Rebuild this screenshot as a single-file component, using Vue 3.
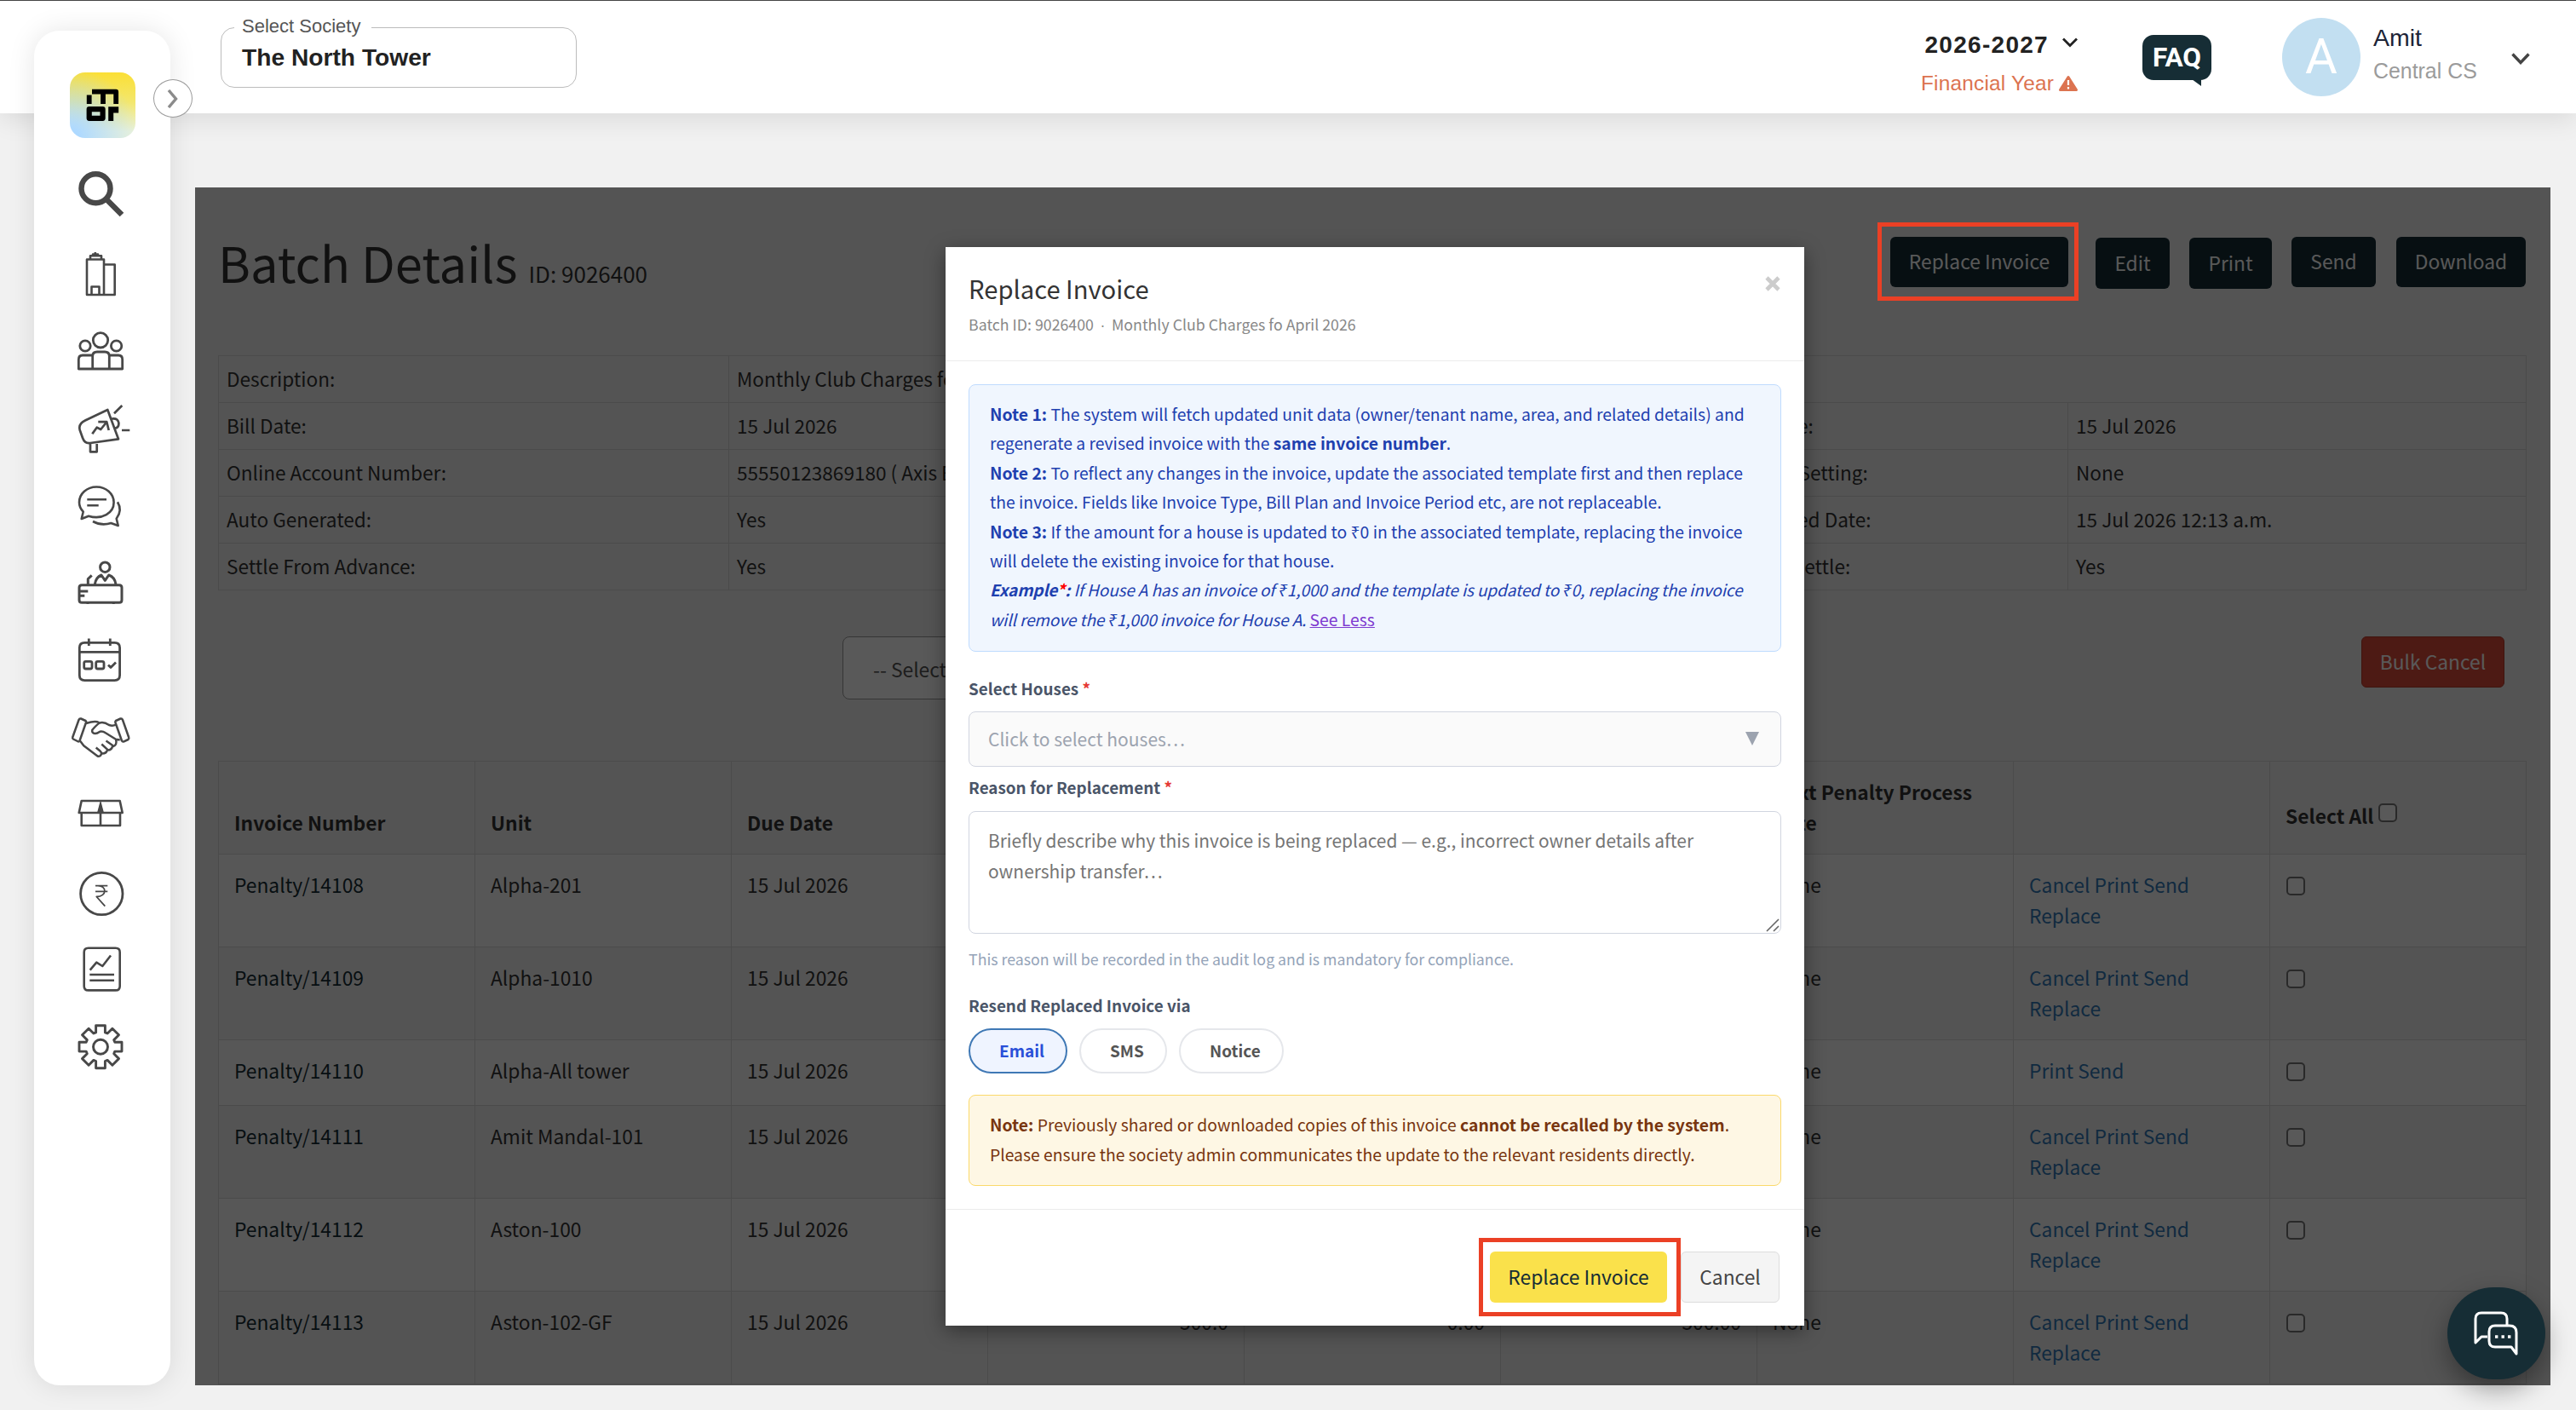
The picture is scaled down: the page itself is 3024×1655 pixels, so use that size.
<script setup>
import { ref } from 'vue'

const society = ref('The North Tower')
const reason = ref('')
const channels = ref([
  { label: 'Email', active: true },
  { label: 'SMS', active: false },
  { label: 'Notice', active: false },
])

const details = [
  ['Bill Date:', '15 Jul 2026', 'Due Date:', '15 Jul 2026'],
  ['Online Account Number:', '55550123869180 ( Axis Bank )', 'Penalty Setting:', 'None'],
  ['Auto Generated:', 'Yes', 'Generated Date:', '15 Jul 2026 12:13 a.m.'],
  ['Settle From Advance:', 'Yes', 'Enable Settle:', 'Yes'],
]

const invoices = [
  { no: 'Penalty/14108', unit: 'Alpha-201' },
  { no: 'Penalty/14109', unit: 'Alpha-1010' },
  { no: 'Penalty/14110', unit: 'Alpha-All tower', short: true },
  { no: 'Penalty/14111', unit: 'Amit Mandal-101' },
  { no: 'Penalty/14112', unit: 'Aston-100' },
  { no: 'Penalty/14113', unit: 'Aston-102-GF', amount: '500.0', penalty: '0.00', total: '500.00' },
]

// gear outline: one tooth rotated eight times
const gear = (() => {
  const tooth = [[-5.4, -16.8], [-5.4, -25], [5.4, -25], [5.4, -16.8]]
  const pts = []
  for (let k = 0; k < 8; k++) {
    const a = (k * Math.PI) / 4
    tooth.forEach(([x, y]) => {
      const px = 40 + x * Math.cos(a) - y * Math.sin(a)
      const py = 50.7 + x * Math.sin(a) + y * Math.cos(a)
      pts.push(`${px.toFixed(1)} ${py.toFixed(1)}`)
    })
  }
  return `M${pts.join('L')}Z`
})()

const menu = [
  { name: 'search', w: 6.5, d: 'M51.5 33.3a17 17 0 1 1-34 0a17 17 0 1 1 34 0ZM46.5 45.5L65 64' },
  {
    name: 'building',
    w: 2.6,
    d: 'M24 26.5H44V68H24ZM44 32.5H56.7V68H44M28 26V22.3H41V26M31 22V20.5H37V22M33.8 18V21M29.5 68V58.5H38.5V68',
  },
  {
    name: 'people',
    w: 2.8,
    d: 'M48.7 31.3a8.7 8.7 0 1 1-17.4 0a8.7 8.7 0 1 1 17.4 0ZM28.2 38a6.2 6.2 0 1 1-12.4 0a6.2 6.2 0 1 1 12.4 0ZM64.8 38a6.2 6.2 0 1 1-12.4 0a6.2 6.2 0 1 1 12.4 0ZM30.7 65V50Q30.7 45 36 45H45Q50.3 45 50.3 50V65M30.7 49H19Q14.3 49 14.3 54V65H65.7V54Q65.7 49 61 49H50.3',
  },
  {
    name: 'campaign',
    w: 2.7,
    d: 'M48.3 23L22 35.5Q13.5 39.5 15.8 47L19 56Q21.5 63 28 62L61 57.3ZM28 62V72.3H35.7V61M53 33.7Q60 32.5 61.3 38Q62 43.5 57.3 44.7M30.3 51.3L35.7 43.7L40.3 46L46.7 38M37.3 37.2H47.3L49.7 47M56 27.3L65.3 18M65 47H74.3',
  },
  {
    name: 'chat',
    w: 2.6,
    d: 'M19.7 52.7L17.7 61L26 57.7C42 62.5 55.6 54 55.6 41.7C55.6 31.5 46.5 23.5 35.3 23.5C24 23.5 15 31.5 15 41.7Q15 47.5 19.7 52.7ZM24.3 38.3H47M24.3 45.3H37.7M60 41.3Q66 51 58.7 60.7L60.7 69L52.3 66Q41 69.5 31 64',
  },
  {
    name: 'frontdesk',
    w: 3,
    d: 'M51 27.7a5.7 5.7 0 1 1-11.4 0a5.7 5.7 0 1 1 11.4 0ZM33.3 48Q34.5 39.5 41 37L45.3 43.3L49.7 37Q57 39.5 58 48M25.3 48V41.5L29.7 37.3M18 48.7H62Q65 48.7 65 51.7V66.3Q65 69.3 62 69.3H18Q15 69.3 15 66.3V51.7Q15 48.7 18 48.7ZM16 56H25.3M16 61.3H21.3M25 70V71M55.3 70V71',
  },
  {
    name: 'calendar',
    w: 2.8,
    d: 'M21.3 26.3H56.6Q62.6 26.3 62.6 32.3V64.6Q62.6 70.6 56.6 70.6H21.3Q15.3 70.6 15.3 64.6V32.3Q15.3 26.3 21.3 26.3ZM15.3 37.3H62.6M26.3 21.5V30M51.3 21.5V30M22.7 48.3H28Q30 48.3 30 50.3V55Q30 57 28 57H22.7Q20.7 57 20.7 55V50.3Q20.7 48.3 22.7 48.3ZM36.7 48.3H42Q44 48.3 44 50.3V55Q44 57 42 57H36.7Q34.7 57 34.7 55V50.3Q34.7 48.3 36.7 48.3ZM49 52.5L52 55.5L58 49.5',
  },
  {
    name: 'handshake',
    w: 2.5,
    d: 'M17 25.5L22.5 28Q23.5 29 23 30L15.5 51.5Q14.7 53 13 52L8 49.5Q6.8 48.5 7.2 47.5L14.5 27Q15.3 25 17 25.5ZM63.5 25.5L58 28Q57 29 57.4 30L65 51.5Q65.8 53 67.5 52.3L72.5 50Q73.8 49 73.2 47.5L66 27Q65.2 25 63.5 25.5ZM23 31Q34 27.5 38 30M58 32.5Q54.5 34.5 50 33Q44 29 39 30.5Q36 32 30.3 38.7Q29.5 42.5 33.7 43Q36 43 39.3 40.7Q43 40.2 45.5 42L58 49.7M16.3 52L20.3 57.3L36.5 69.5Q39.5 70.8 41 67Q41.3 65 39.5 63.5L34.7 59.5M41 66.5Q47 67 48 61.7L41.3 55.5M47.5 62.5Q53.5 63 54.3 57L46.5 51.5M54 58.5Q60 57 58 49.7L62.7 50.5',
  },
  { name: 'package', w: 2.6, d: 'M17.7 46V61H63V46M17.7 32H62.7L65.7 46H14.7ZM40 46V61', fill: 'M40 31L44 46H36Z' },
  {
    name: 'rupee',
    w: 2.8,
    d: 'M66 51a24.7 24.7 0 1 1-49.4 0a24.7 24.7 0 1 1 49.4 0Z',
    thin: 'M34 41.7H48.3M34 48.3H48.3M36 41.7C48 41 48 54.5 35.3 54.5L45.3 65.7',
  },
  {
    name: 'report',
    w: 2.6,
    d: 'M25.7 24.7H57.7Q62.7 24.7 62.7 29.7V69.4Q62.7 74.4 57.7 74.4H25.7Q20.7 74.4 20.7 69.4V29.7Q20.7 24.7 25.7 24.7ZM27.7 50.7L35.3 41.7L42.3 46L52 33.5M27.3 56H56M27.3 62.7H56',
  },
  { name: 'settings', w: 2.9, d: gear + 'M48.5 50.7a8.5 8.5 0 1 1-17 0a8.5 8.5 0 1 1 17 0Z' },
]
</script>

<template>
  <div class="page">
    <header class="topbar">
      <fieldset class="society">
        <legend><span>Select Society</span></legend>
        <div class="society__name">{{ society }}</div>
      </fieldset>

      <div class="topbar__right">
        <div class="year">
          <div class="year__value">
            <span>2026-2027</span>
            <svg width="20" height="14" viewBox="0 0 20 14"><path d="M2 2.5L10 10.5L18 2.5" fill="none" stroke="#222" stroke-width="2.8" /></svg>
          </div>
          <div class="year__label">
            <span>Financial Year</span>
            <svg width="24" height="20" viewBox="0 0 24 20">
              <path d="M12 2.5L21.5 17.5H2.5Z" fill="#dc7350" stroke="#dc7350" stroke-width="3" stroke-linejoin="round" />
              <path d="M12 6V12M12 14V16.4" stroke="#fff" stroke-width="2.2" />
            </svg>
          </div>
        </div>
        <div class="faq">FAQ</div>
        <div class="user">
          <div class="user__avatar">A</div>
          <div class="user__text">
            <div class="user__name">Amit</div>
            <div class="user__role">Central CS</div>
          </div>
          <svg class="user__caret" width="24" height="16" viewBox="0 0 24 16"><path d="M2.5 2.5L12 12.5L21.5 2.5" fill="none" stroke="#444" stroke-width="3.4" /></svg>
        </div>
      </div>
    </header>

    <!-- batch page, dimmed by the modal backdrop -->
    <main class="panel">
      <div class="panel__head">
        <h1 class="title">Batch Details <small>ID: 9026400</small></h1>
        <div class="actions">
          <button class="btn btn--dark btn--replace" type="button">Replace Invoice</button>
          <button class="btn btn--dark btn--low btn--edit" type="button">Edit</button>
          <button class="btn btn--dark btn--low btn--print" type="button">Print</button>
          <button class="btn btn--dark btn--send" type="button">Send</button>
          <button class="btn btn--dark btn--download" type="button">Download</button>
        </div>
      </div>

      <table class="info">
        <colgroup>
          <col class="info__c1" />
          <col class="info__c2" />
          <col class="info__c3" />
          <col />
        </colgroup>
        <tbody>
          <tr>
            <td>Description:</td>
            <td colspan="3">Monthly Club Charges fo April 2026</td>
          </tr>
          <tr v-for="row in details" :key="row[0]">
            <td v-for="(cell, i) in row" :key="i">{{ cell }}</td>
          </tr>
        </tbody>
      </table>

      <div class="toolbar">
        <div class="toolbar__select">-- Select --</div>
        <button class="btn btn--danger" type="button">Bulk Cancel</button>
      </div>

      <table class="grid">
        <thead>
          <tr>
            <th>Invoice Number</th>
            <th>Unit</th>
            <th>Due Date</th>
            <th></th>
            <th></th>
            <th></th>
            <th>Next Penalty Process Date</th>
            <th></th>
            <th class="grid__all">Select All<input class="check" type="checkbox" /></th>
          </tr>
        </thead>
        <tbody>
          <tr v-for="inv in invoices" :key="inv.no" :class="{ 'is-short': inv.short }">
            <td><a class="grid__no">{{ inv.no }}</a></td>
            <td>{{ inv.unit }}</td>
            <td>15 Jul 2026</td>
            <td class="num">{{ inv.amount }}</td>
            <td class="num">{{ inv.penalty }}</td>
            <td class="num">{{ inv.total }}</td>
            <td>None</td>
            <td>
              <template v-if="inv.short"><a>Print</a> <a>Send</a></template>
              <template v-else><a>Cancel</a> <a>Print</a> <a>Send</a> <a>Replace</a></template>
            </td>
            <td><input class="check" type="checkbox" /></td>
          </tr>
        </tbody>
      </table>
      <div class="backdrop"></div>
    </main>

    <aside class="sidebar">
      <div class="logo">
        <svg width="77" height="77" viewBox="0 0 77 77">
          <path d="M26 22.7H54.2V37M39 23V37M22.7 26.5V37" fill="none" stroke="#000" stroke-width="5.8" stroke-linejoin="round" />
          <path d="M22.7 43.2H38.6V53.8H22.7Z" fill="none" stroke="#000" stroke-width="6.2" stroke-linejoin="round" />
          <path d="M48.2 57V43.2H57.2M54.2 40.5V47.5" fill="none" stroke="#000" stroke-width="6" />
        </svg>
      </div>
      <nav class="menu">
        <a v-for="item in menu" :key="item.name" class="menu__item">
          <svg width="80" height="90" viewBox="0 0 80 90">
            <path :d="item.d" :stroke-width="item.w" class="line" />
            <path v-if="item.thin" :d="item.thin" stroke-width="1.8" class="line" />
            <path v-if="item.fill" :d="item.fill" fill="#484848" />
          </svg>
        </a>
      </nav>
      <button class="sidebar__toggle" type="button">
        <svg width="14" height="22" viewBox="0 0 14 22"><path d="M2 1L10.5 11L2 21" fill="none" stroke="#8b8b8b" stroke-width="3.4" /></svg>
      </button>
    </aside>

    <section class="modal">
      <header class="modal__head">
        <div>
          <h2>Replace Invoice</h2>
          <p>Batch ID: 9026400<span class="dot">·</span>Monthly Club Charges fo April 2026</p>
        </div>
        <svg class="modal__close" width="20" height="20" viewBox="0 0 20 20"><path d="M3 3L17 17M17 3L3 17" stroke="#ccc" stroke-width="4.6" /></svg>
      </header>

      <div class="modal__body">
        <div class="notes">
          <div class="ln"><b>Note 1:</b> The system will fetch updated unit data (owner/tenant name, area, and related details) and</div>
          <div class="ln">regenerate a revised invoice with the <b>same invoice number</b>.</div>
          <div class="ln"><b>Note 2:</b> To reflect any changes in the invoice, update the associated template first and then replace</div>
          <div class="ln">the invoice. Fields like Invoice Type, Bill Plan and Invoice Period etc, are not replaceable.</div>
          <div class="ln"><b>Note 3:</b> If the amount for a house is updated to ₹0 in the associated template, replacing the invoice</div>
          <div class="ln">will delete the existing invoice for that house.</div>
          <div class="ln ex"><b>Example<span class="red">*</span>:</b> If House A has an invoice of ₹1,000 and the template is updated to ₹0, replacing the invoice</div>
          <div class="ln"><span class="ex">will remove the ₹1,000 invoice for House A.</span> <a class="less">See Less</a></div>
        </div>

        <label class="label label--houses">Select Houses <i>*</i></label>
        <div class="picker">
          <span>Click to select houses…</span>
          <svg width="18" height="18" viewBox="0 0 18 18"><path d="M1 1H17L9 17Z" fill="#9ca3af" /></svg>
        </div>

        <label class="label label--reason">Reason for Replacement <i>*</i></label>
        <div class="reason">
          <textarea
            v-model="reason"
            placeholder="Briefly describe why this invoice is being replaced — e.g., incorrect owner details after ownership transfer…"
          ></textarea>
          <svg width="18" height="18" viewBox="0 0 18 18"><path d="M2 16L16 2M10 16L16 10" stroke="#666" stroke-width="1.6" /></svg>
        </div>
        <p class="hint">This reason will be recorded in the audit log and is mandatory for compliance.</p>

        <label class="label label--via">Resend Replaced Invoice via</label>
        <div class="pills">
          <button
            v-for="c in channels"
            :key="c.label"
            type="button"
            class="pill"
            :class="{ 'is-active': c.active }"
            @click="c.active = !c.active"
          >
            {{ c.label }}
          </button>
        </div>

        <div class="warn">
          <div><b>Note:</b> Previously shared or downloaded copies of this invoice <b>cannot be recalled by the system</b>.</div>
          <div>Please ensure the society admin communicates the update to the relevant residents directly.</div>
        </div>
      </div>

      <footer class="modal__foot">
        <button class="btn btn--yellow" type="button">Replace Invoice</button>
        <button class="btn btn--plain" type="button">Cancel</button>
      </footer>
    </section>

    <!-- highlight frames -->
    <div class="frame frame--top"></div>
    <div class="frame frame--bottom"></div>

    <button class="fab" type="button">
      <svg width="54" height="54" viewBox="0 0 54 54" fill="none" stroke="#fff" stroke-width="3" stroke-linejoin="round">
        <path d="M17 31H10L3 38V10Q3 3 10 3H33Q40 3 40 10V17" />
        <path d="M26 18H43Q51 18 51 26V51L45 43H26Q19 43 19 36V25Q19 18 26 18Z" />
        <path d="M26 31H29.4M33.5 31H36.9M41 31H44.4" stroke-width="3.6" />
      </svg>
    </button>
  </div>
</template>

<style>
body {
  margin: 0;
  background: #f1f1f1;
}
</style>

<style scoped>
.page {
  position: relative;
  width: 3024px;
  height: 1655px;
  overflow: hidden;
  background: #f1f1f1;
  font-family: 'Noto Sans CJK SC', 'Noto Sans', sans-serif;
  font-size: 22.8px;
  line-height: 36px;
  color: #333;
}
.page *,
.page *::before {
  box-sizing: border-box;
}
button,
textarea {
  font: inherit;
  margin: 0;
}

/* top bar */
.topbar {
  display: flex;
  justify-content: space-between;
  height: 133px;
  padding-left: 259px;
  border-top: 1px solid #444;
  background: #fff;
  box-shadow: 0 8px 28px rgba(0, 0, 0, 0.09);
  font-family: 'Liberation Sans', sans-serif;
}
.society {
  width: 418px;
  height: 83px;
  margin: 19px 0 0;
  padding: 0 0 0 24px;
  border: 1px solid #bcbcbc;
  border-radius: 16px;
}
.society legend {
  height: 24px;
  margin-left: -9px;
  padding: 0 13px 0 9px;
  font-size: 22px;
  line-height: 21px;
  color: #555;
}
.society__name {
  margin-top: 7px;
  font-size: 28.2px;
  line-height: 32px;
  font-weight: bold;
  color: #222;
}
.topbar__right {
  display: flex;
}
.year {
  display: flex;
  flex-direction: column;
  width: 195px;
  margin-right: 75px;
  padding-top: 34px;
  white-space: nowrap;
}
.year__value,
.year__label {
  display: flex;
  align-items: center;
  justify-content: flex-end;
}
.year__value {
  height: 36px;
  gap: 15px;
  font-size: 28px;
  font-weight: bold;
  letter-spacing: 1.3px;
  color: #222;
}
.year__label {
  height: 36px;
  margin-top: 9px;
  gap: 5px;
  font-size: 24.4px;
  letter-spacing: 0.2px;
  color: #dc7350;
}
.year__value svg {
  margin-top: -6px;
}
.faq {
  position: relative;
  width: 81px;
  height: 53px;
  margin: 40px 1px 0 0;
  border-radius: 13px;
  background: #162d35;
  color: #fff;
  font: bold 31.5px/54px Roboto, sans-serif;
  text-align: center;
}
.faq::after {
  content: '';
  position: absolute;
  right: 12px;
  bottom: -7px;
  border-top: 8px solid #162d35;
  border-left: 11px solid transparent;
}
.user {
  display: flex;
  width: 427px;
  padding: 20px 0 0 82px;
}
.user__avatar {
  width: 92px;
  height: 92px;
  border-radius: 50%;
  background: #c2dff1;
  color: #fff;
  font: 58px/91px Roboto, sans-serif;
  text-align: center;
}
.user__text {
  width: 176px;
  padding: 5px 0 0 15px;
}
.user__name {
  font-size: 28.5px;
  color: #1d2437;
}
.user__role {
  margin-top: 3px;
  font-size: 24.9px;
  color: #9b9b9b;
}
.user__caret {
  margin-top: 40px;
}

/* sidebar */
.sidebar {
  position: absolute;
  left: 40px;
  top: 36px;
  width: 160px;
  height: 1590px;
  border-radius: 30px;
  background: #fff;
  box-shadow: 0 0 32px rgba(0, 0, 0, 0.1);
}
.logo {
  width: 77px;
  height: 77px;
  margin: 49px 0 0 42px;
  border-radius: 18px;
  background:
    radial-gradient(circle at 0% 100%, #aed9ff 10%, rgba(174, 217, 255, 0) 75%),
    linear-gradient(180deg, #fbdf35 0%, #f3e76d 45%, #ecf3d9 90%);
}
.menu {
  display: flex;
  flex-direction: column;
  margin: 26px 0 0 38px;
}
.menu__item {
  height: 90px;
}
.menu__item svg {
  display: block;
}
.line {
  fill: none;
  stroke: #484848;
  stroke-linejoin: round;
}
.sidebar__toggle {
  position: absolute;
  left: 140px;
  top: 57px;
  display: flex;
  align-items: center;
  justify-content: center;
  width: 46px;
  height: 45px;
  padding: 0;
  border: 1px solid #999;
  border-radius: 50%;
  background: #fff;
}

/* batch panel */
.panel {
  position: relative;
  width: 2765px;
  height: 1406px;
  margin: 87px 0 0 229px;
  padding: 0 28px 0 27px;
  overflow: hidden;
}
.backdrop {
  position: absolute;
  inset: 0;
  background: rgba(0, 0, 0, 0.65);
}
.panel__head {
  display: flex;
  align-items: flex-start;
  justify-content: space-between;
  height: 197px;
}
.title {
  margin: 45px 0 0;
  font-size: 57.8px;
  line-height: 84px;
  font-weight: normal;
}
.title small {
  font-size: 26px;
}
.actions {
  display: flex;
  align-items: flex-start;
  padding: 58px 1px 0 0;
}
.btn {
  height: 59px;
  padding: 0 0 2px;
  border: 1px solid transparent;
  border-radius: 6px;
  text-align: center;
  line-height: 55px;
  white-space: nowrap;
}
.btn--dark {
  background: #162d35;
  color: #fff;
}
.btn--low {
  height: 60px;
  margin-top: 1px;
}
.btn--replace {
  width: 209px;
}
.btn--edit {
  width: 87px;
  margin-left: 32px;
}
.btn--print {
  width: 97px;
  margin-left: 23px;
}
.btn--send {
  width: 99px;
  margin-left: 23px;
}
.btn--download {
  width: 152px;
  margin-left: 24px;
}
.btn--danger {
  width: 168px;
  height: 60px;
  background: #dd4b39;
  border-color: #b83a2a;
  color: #fff;
}

.info,
.grid {
  width: 2710px;
  table-layout: fixed;
  border-collapse: collapse;
}
.info td {
  height: 55px;
  padding: 0 9px 1px;
  border: 1px solid #d6d6d6;
  font-size: 22.6px;
}
.info__c1 {
  width: 599px;
}
.info__c2 {
  width: 1162px;
}
.info__c3 {
  width: 410px;
}

.toolbar {
  display: flex;
  justify-content: space-between;
  height: 200px;
  padding: 54px 26px 0 733px;
}
.toolbar__select {
  width: 700px;
  height: 74px;
  padding: 20px 35px;
  border: 1px solid #999;
  border-radius: 8px;
  background: #fff;
  color: #555;
}

.grid th,
.grid td {
  padding: 18px;
  border: 1px solid #d6d6d6;
  text-align: left;
  vertical-align: top;
}
.grid th {
  height: 109px;
  vertical-align: bottom;
  font-weight: bold;
}
.grid td {
  height: 109px;
}
.grid .is-short td {
  height: 77px;
}
.grid tbody tr:nth-child(odd) {
  background: #f9f9f9;
}
.grid a {
  color: #337ab7;
}
.grid .grid__no {
  color: #162d35;
}
.grid td.num {
  text-align: right;
}
.grid th.grid__all {
  padding-bottom: 26px;
}
.check {
  appearance: none;
  display: block;
  width: 22px;
  height: 22px;
  margin: 8px 0 0 1px;
  border: 2px solid #767676;
  border-radius: 5px;
  background: #fff;
}
.grid__all .check {
  display: inline-block;
  margin: 0 0 2px 6px;
}

/* modal */
.modal {
  position: absolute;
  left: 1110px;
  top: 290px;
  width: 1008px;
  height: 1266px;
  background: #fff;
  box-shadow: 0 6px 22px rgba(0, 0, 0, 0.4);
}
.modal__head {
  display: flex;
  justify-content: space-between;
  height: 134px;
  padding: 27px 27px 0;
  border-bottom: 1px solid #ececec;
}
.modal__head h2 {
  margin: 0;
  font-size: 29.2px;
  line-height: 42px;
  font-weight: normal;
}
.modal__head p {
  margin: 7px 0 0;
  font-size: 17.75px;
  line-height: 28px;
  color: #888;
}
.dot {
  display: inline-block;
  width: 21px;
  font-family: 'Liberation Sans', sans-serif;
  text-align: center;
}
.modal__close {
  margin-top: 6px;
}
.modal__body {
  height: 996px;
  padding: 27px 27px 0;
  border-bottom: 1px solid #ececec;
}
.notes {
  height: 314px;
  padding: 17px 24px;
  border: 1px solid #bfdbfe;
  border-radius: 8px;
  background: #f0f6fe;
  color: #1e40af;
  font-size: 19.33px;
  line-height: 34.4px;
}
.ln {
  height: 34.4px;
  white-space: nowrap;
}
.ex {
  font-size: 19px;
  font-style: italic;
  letter-spacing: -0.12px;
}
.red {
  color: #f00;
}
.less {
  color: #7e3bd0;
  text-decoration: underline;
}
.label {
  display: block;
  height: 36px;
  font-size: 18.85px;
  font-weight: bold;
  color: #4a5568;
}
.label i {
  color: #e53935;
  font-style: normal;
}
.label--houses {
  margin-top: 25px;
}
.picker {
  display: flex;
  align-items: center;
  justify-content: space-between;
  height: 65px;
  margin-top: 9px;
  padding: 0 24px 1px 22px;
  border: 1px solid #d1d5e0;
  border-radius: 8px;
  background: #fafafa;
  color: #9ca3af;
  font-size: 21px;
}
.label--reason {
  margin-top: 6px;
}
.reason {
  position: relative;
  margin-top: 10px;
}
.reason textarea {
  display: block;
  width: 100%;
  height: 144px;
  padding: 15px 22px;
  border: 1px solid #d1d5e0;
  border-radius: 8px;
  resize: none;
  outline: none;
  font-size: 20.93px;
  line-height: 36px;
  overflow: hidden;
}
.reason textarea::placeholder {
  color: #757575;
}
.reason svg {
  position: absolute;
  right: 1px;
  bottom: 1px;
}
.hint {
  margin: 15px 0 0;
  font-size: 17.75px;
  line-height: 28px;
  color: #94a3b8;
}
.label--via {
  margin-top: 23px;
}
.pills {
  display: flex;
  gap: 14px;
  margin-top: 9px;
}
.pill {
  height: 53px;
  padding: 0 25px 2px 34px;
  border: 2px solid #e5e7eb;
  border-radius: 27px;
  background: #fff;
  color: #555;
  font-size: 19px;
  font-weight: bold;
  line-height: 46px;
}
.pill.is-active {
  border-color: #3f78b5;
  background: #eff4ff;
  color: #2a4fd8;
}
.warn {
  height: 107px;
  margin-top: 25px;
  padding: 17px 24px;
  border: 1px solid #fbd96b;
  border-radius: 8px;
  background: #fef7e4;
  color: #78350f;
  font-size: 19.33px;
  line-height: 34.8px;
  white-space: nowrap;
}
.modal__foot {
  display: flex;
  justify-content: flex-end;
  gap: 16px;
  padding: 49px 29px 0 0;
}
.btn--yellow {
  width: 208px;
  height: 60px;
  background: #fae14b;
  color: #162d35;
}
.btn--plain {
  width: 116px;
  height: 60px;
  border-color: #ddd;
  background: #f4f4f4;
  color: #444;
}

.frame {
  position: absolute;
  border: 5px solid #eb4025;
}
.frame--top {
  left: 2204px;
  top: 261px;
  width: 236px;
  height: 92px;
}
.frame--bottom {
  left: 1736px;
  top: 1453px;
  width: 237px;
  height: 92px;
}

.fab {
  position: absolute;
  left: 2873px;
  top: 1511px;
  display: flex;
  align-items: center;
  justify-content: center;
  width: 115px;
  height: 108px;
  padding: 0 2px 0 0;
  border: 0;
  border-radius: 58px;
  background: #162d35;
  box-shadow: 0 12px 30px rgba(0, 0, 0, 0.35);
}
</style>
